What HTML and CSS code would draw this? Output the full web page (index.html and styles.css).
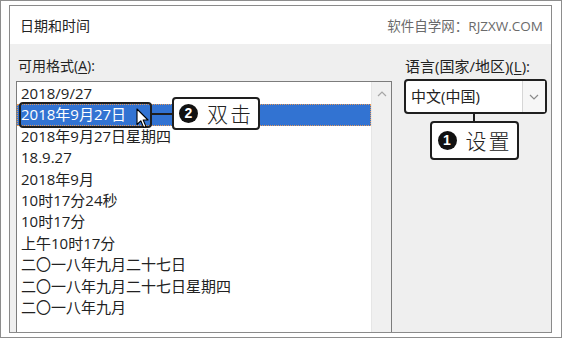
FILE: index.html
```html
<!DOCTYPE html>
<html lang="zh-CN">
<head>
    <meta charset="UTF-8">
    <meta name="viewport" content="width=device-width, initial-scale=1.0">
    <title>日期和时间</title>
    <link rel="stylesheet" href="styles.css">
</head>
<body>
    <div class="frame">
        <div class="dialog">
            <header class="dialog-head">
                <div class="title">日期和时间</div>
                <div class="site">软件自学网：RJZXW.COM</div>
            </header>

            <div class="dialog-body">
                <!-- 左侧：可用格式 -->
                <div class="formats">
                    <div class="label">可用格式(<u>A</u>):</div>
                    <div class="listbox">
                        <div class="items">
                            <div class="item">2018/9/27</div>
                            <div class="item selected">
                                <span>2018年9月27日</span>
                                <div class="mark"></div>
                                <div class="link-h"></div>
                                <svg class="cursor" width="13" height="21" viewBox="0 0 13 21">
                                    <path d="M1 1 L1 16.5 L4.8 12.8 L7.6 19.4 L9.9 18.4 L7.2 12 L12 12 Z" fill="#fff" stroke="#000" stroke-width="1.1" stroke-linejoin="round"/>
                                </svg>
                                <div class="callout callout-2">
                                    <span class="num">2</span>
                                    <span class="callout-text">双击</span>
                                </div>
                            </div>
                            <div class="item">2018年9月27日星期四</div>
                            <div class="item">18.9.27</div>
                            <div class="item">2018年9月</div>
                            <div class="item">10时17分24秒</div>
                            <div class="item">10时17分</div>
                            <div class="item">上午10时17分</div>
                            <div class="item">二〇一八年九月二十七日</div>
                            <div class="item">二〇一八年九月二十七日星期四</div>
                            <div class="item">二〇一八年九月</div>
                        </div>
                        <div class="scrollbar">
                            <svg width="10" height="6" viewBox="0 0 10 6">
                                <path d="M1 5 L5 1 L9 5" fill="none" stroke="#a6a6a6" stroke-width="1.2"/>
                            </svg>
                        </div>
                    </div>
                </div>

                <!-- 右侧：语言 -->
                <div class="lang">
                    <div class="label">语言(国家/地区)(<u>L</u>):</div>
                    <div class="combo">
                        <div class="combo-value">中文(中国)</div>
                        <div class="combo-arrow">
                            <svg width="10" height="6" viewBox="0 0 10 6">
                                <path d="M1 1 L5 5 L9 1" fill="none" stroke="#8a8a8a" stroke-width="1.2"/>
                            </svg>
                        </div>
                        <div class="link-v"></div>
                        <div class="callout callout-1">
                            <span class="num">1</span>
                            <span class="callout-text">设置</span>
                        </div>
                    </div>
                </div>
            </div>
        </div>
    </div>
</body>
</html>
```

FILE: styles.css
```css
body {
    margin: 0;
    font-family: "Open Sans", "Noto Sans CJK SC", sans-serif;
    color: #222;
}

.frame {
    width: 562px;
    height: 338px;
    box-sizing: border-box;
    border: 1px solid #8d8d8d;
    background-color: #fff;
    padding: 4px 9px 4px 8px;
}

.dialog {
    height: 100%;
    box-sizing: border-box;
    border: 1px solid #8a8a8a;
    display: flex;
    flex-direction: column;
    overflow: hidden;
}

.dialog-head {
    height: 38px;
    flex-shrink: 0;
    background-color: #fff;
    display: flex;
    justify-content: space-between;
    align-items: center;
    padding: 0 8px 0 10px;
}

.dialog-head .title {
    font-size: 14px;
}

.dialog-head .site {
    font-size: 13.5px;
    color: #6a6a6a;
}

.dialog-body {
    flex: 1;
    display: flex;
    gap: 12px;
    padding: 13px 3px 0 6px;
    background-color: #efefef;
    min-height: 0;
}

.label {
    font-size: 14px;
    line-height: 18px;
    margin: 0 0 6px 2px;
    white-space: nowrap;
}

.label u {
    text-underline-offset: 2px;
}

.formats {
    width: 376px;
    display: flex;
    flex-direction: column;
}

.listbox {
    flex: 1;
    display: flex;
    border: 1px solid #7c7c7c;
    border-bottom: none;
    background-color: #fff;
    min-height: 0;
}

.items {
    flex: 1;
    padding-top: 1px;
}

.item {
    font-size: 15px;
    line-height: 21.4px;
    height: 21.4px;
    padding-left: 4px;
    white-space: nowrap;
}

.item.selected {
    position: relative;
    background-color: #3273d2;
    color: #fff;
    outline: 1px dotted #e39a5a;
    outline-offset: -1px;
}

.scrollbar {
    width: 20px;
    background-color: #f0f0f0;
    border-left: 1px solid #e6e6e6;
    display: flex;
    justify-content: center;
    padding-top: 9px;
    box-sizing: border-box;
}

.lang {
    width: 143px;
    display: flex;
    flex-direction: column;
}

.lang .label {
    font-size: 15px;
    margin: 0 0 4px 1px;
}

.combo {
    position: relative;
    height: 35px;
    box-sizing: border-box;
    border: 2px solid #1f1f1f;
    border-radius: 4px;
    background-color: #fff;
    display: flex;
}

.combo-value {
    flex: 1;
    font-size: 15px;
    line-height: 31px;
    padding-left: 5px;
}

.combo-arrow {
    width: 22px;
    border-left: 1px solid #d6d6d6;
    background-color: #f6f6f6;
    display: flex;
    align-items: center;
    justify-content: center;
}

/* 标注：高亮框、连线、说明框 */
.mark {
    position: absolute;
    left: 2px;
    top: -2px;
    width: 133px;
    height: 26px;
    box-sizing: border-box;
    border: 2px solid #1e1e1e;
    border-radius: 4px;
}

.link-h {
    position: absolute;
    left: 135px;
    top: 9px;
    width: 20px;
    height: 2px;
    background-color: #1e1e1e;
}

.link-v {
    position: absolute;
    left: 67px;
    top: 100%;
    width: 2px;
    height: 11px;
    background-color: #1e1e1e;
}

.cursor {
    position: absolute;
    left: 119px;
    top: 4px;
}

.callout {
    position: absolute;
    box-sizing: border-box;
    border: 2px solid #1e1e1e;
    border-radius: 4px;
    background-color: #fff;
    color: #222;
    display: flex;
    align-items: center;
    justify-content: center;
    gap: 9px;
}

.callout-2 {
    left: 155px;
    top: -7px;
    width: 88px;
    height: 33px;
}

.callout-1 {
    left: 24px;
    top: calc(100% + 9px);
    width: 89px;
    height: 39px;
}

.num {
    width: 19px;
    height: 19px;
    border-radius: 50%;
    background-color: #111;
    color: #fff;
    font-family: "Liberation Sans", sans-serif;
    font-weight: bold;
    font-size: 14px;
    line-height: 19px;
    text-align: center;
}

.callout-text {
    font-size: 21px;
    letter-spacing: 2px;
    font-weight: 300;
    line-height: 24px;
}
```
